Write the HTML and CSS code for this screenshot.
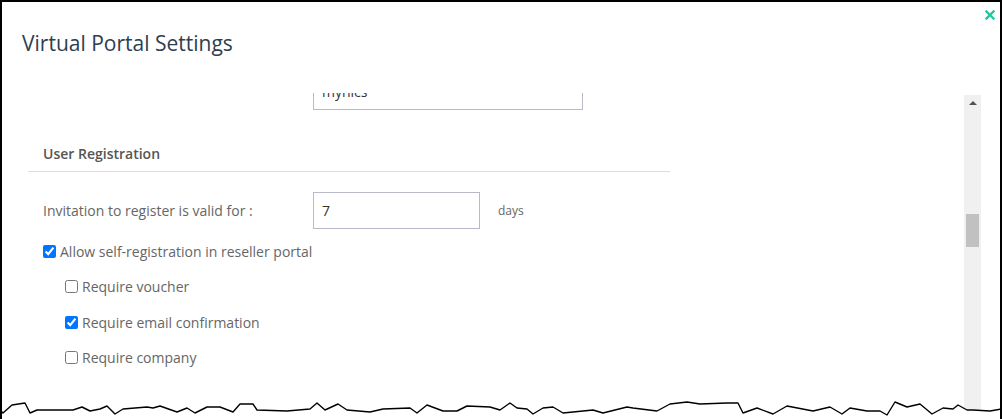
FILE: index.html
```html
<!DOCTYPE html>
<html>
<head>
  <title>Virtual Portal Settings</title>
  <link rel="stylesheet" href="styles.css">
</head>
<body>
  <div class="dialog">
    <div class="dialog-header">
      <h2>Virtual Portal Settings</h2>
      <svg class="close" width="10" height="10" viewBox="0 0 10 10">
        <path d="M1.5 1.5 L8.5 8.5 M8.5 1.5 L1.5 8.5" stroke="#1fc9a0" stroke-width="2.4" stroke-linecap="square"/>
      </svg>
    </div>

    <div class="dialog-body">
      <div class="scroll-view">
        <div class="section">
          <div class="form-row first-row">
            <div class="form-label"></div>
            <input type="text" class="text-input wide" value="mynics">
          </div>

          <h3>User Registration</h3>

          <div class="form-row">
            <label class="form-label" for="valid-days">Invitation to register is valid for :</label>
            <input type="text" id="valid-days" class="text-input" value="7">
            <span class="unit">days</span>
          </div>

          <div class="check-row">
            <input type="checkbox" id="self-reg" checked>
            <label for="self-reg">Allow self-registration in reseller portal</label>
          </div>
          <div class="check-row sub">
            <input type="checkbox" id="voucher">
            <label for="voucher">Require voucher</label>
          </div>
          <div class="check-row sub">
            <input type="checkbox" id="email-conf" checked>
            <label for="email-conf">Require email confirmation</label>
          </div>
          <div class="check-row sub">
            <input type="checkbox" id="company">
            <label for="company">Require company</label>
          </div>
        </div>
      </div>

      <div class="scrollbar">
        <div class="scroll-arrow"></div>
        <div class="scroll-thumb"></div>
      </div>
    </div>

    <svg class="torn-edge" width="1002" height="24" viewBox="0 395 1002 24">
      <polygon fill="#fff" points="0,410 3,413 12,405 25,403 30,413 37,410 73,410 82,407 90,411 100,409 107,406 115,414 123,409 147,407 153,408 160,406 177,412 187,408 195,413 207,407 220,407 233,412 240,404 253,404 257,410 287,411 310,409 317,403 325,410 338,404 347,410 370,412 383,409 410,408 417,413 427,405 443,411 457,411 467,406 490,407 500,410 510,403 517,408 527,409 533,414 543,408 553,407 563,413 593,410 603,413 627,407 633,408 657,411 670,404 687,402 700,404 727,403 738,403 743,413 757,408 773,414 787,406 813,411 830,407 842,414 850,408 867,411 880,411 887,415 895,402 907,407 920,404 932,414 943,408 953,409 958,405 967,410 973,410 990,411 1002,409 1002,419 0,419"/>
      <polyline fill="none" stroke="#000" stroke-width="1.4" stroke-linejoin="round" points="0,410 3,413 12,405 25,403 30,413 37,410 73,410 82,407 90,411 100,409 107,406 115,414 123,409 147,407 153,408 160,406 177,412 187,408 195,413 207,407 220,407 233,412 240,404 253,404 257,410 287,411 310,409 317,403 325,410 338,404 347,410 370,412 383,409 410,408 417,413 427,405 443,411 457,411 467,406 490,407 500,410 510,403 517,408 527,409 533,414 543,408 553,407 563,413 593,410 603,413 627,407 633,408 657,411 670,404 687,402 700,404 727,403 738,403 743,413 757,408 773,414 787,406 813,411 830,407 842,414 850,408 867,411 880,411 887,415 895,402 907,407 920,404 932,414 943,408 953,409 958,405 967,410 973,410 990,411 1001,409"/>
    </svg>
  </div>
</body>
</html>
```

FILE: styles.css
```css
body {
  font-family: 'Open Sans', 'Liberation Sans', sans-serif;
  background-color: #fff;
  margin: 0;
  padding: 0;
}
.dialog {
  position: relative;
  width: 1002px;
  height: 419px;
  box-sizing: border-box;
  border: 2px solid #000;
  border-bottom: none;
  display: flex;
  flex-direction: column;
  overflow: hidden;
}
.dialog-header {
  position: relative;
  height: 91px;
  flex-shrink: 0;
  box-sizing: border-box;
  padding: 27px 20px 0;
}
h2 {
  margin: 0;
  font-size: 21px;
  line-height: 28px;
  font-weight: 500;
  color: #2c3e50;
}
.close {
  position: absolute;
  top: 8px;
  right: 5px;
}
.dialog-body {
  flex: 1;
  display: flex;
  min-height: 0;
}
.scroll-view {
  flex: 1;
  overflow: hidden;
  padding-left: 26px;
}
.section {
  width: 642px;
}
.form-row {
  display: flex;
  align-items: center;
  padding-left: 15px;
}
.first-row {
  margin-top: -20px;
}
.form-label {
  width: 270px;
  font-size: 14px;
  color: #666;
}
.text-input {
  width: 167px;
  height: 37px;
  box-sizing: border-box;
  border: 1px solid #b9b9c9;
  padding: 0 8px;
  font-family: inherit;
  font-size: 14px;
  color: #333;
  outline: none;
}
.text-input.wide {
  width: 270px;
}
.unit {
  margin-left: 18px;
  font-size: 12px;
  color: #666;
}
h3 {
  margin: 34px 0 0;
  padding: 0 15px 7px;
  font-size: 14px;
  line-height: 20px;
  font-weight: 600;
  color: #555;
  border-bottom: 1px solid #ddd;
  margin-bottom: 20px;
}
.check-row {
  display: flex;
  align-items: center;
  height: 20px;
  padding-left: 15px;
  margin-top: 12px;
  font-size: 14px;
  color: #666;
}
.check-row.sub {
  padding-left: 37px;
  margin-top: 15.5px;
}
.check-row input {
  width: 13px;
  height: 13px;
  margin: 0 4px 0 0;
}
.scrollbar {
  width: 17px;
  margin: 2px 19px 0 0;
  background-color: #f0f0f0;
  display: flex;
  flex-direction: column;
  align-items: center;
}
.scroll-arrow {
  width: 0;
  height: 0;
  margin-top: 6px;
  border-left: 4px solid transparent;
  border-right: 4px solid transparent;
  border-bottom: 4px solid #505050;
}
.scroll-thumb {
  width: 13px;
  height: 33px;
  margin-top: 109px;
  background-color: #c1c1c1;
}
.torn-edge {
  position: absolute;
  left: -2px;
  bottom: 0;
}
```
